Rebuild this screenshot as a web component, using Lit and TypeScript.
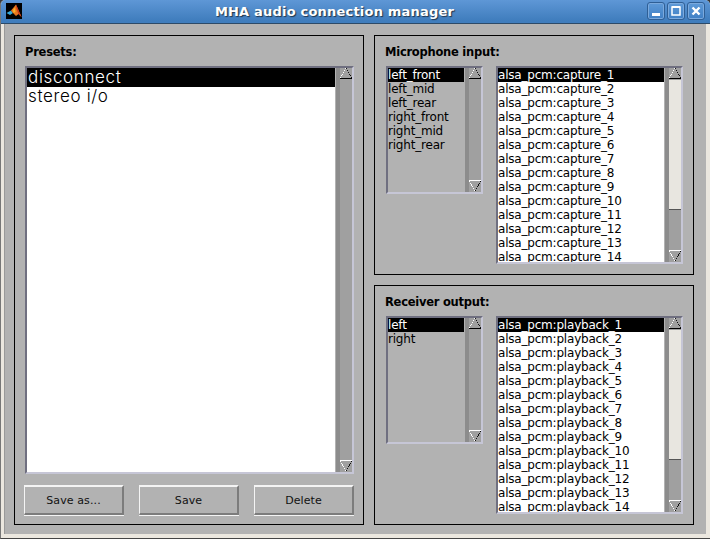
import { LitElement, html, css, svg } from "lit";
import { customElement, property } from "lit/decorators.js";

@customElement("scroll-bar")
class ScrollBar extends LitElement {
  @property({ type: Boolean }) thumb = false;
  static styles = css`
    :host { display: flex; flex: none; width: 16px; background: #8c8c8c; padding-left: 4px; box-sizing: border-box; }
    .track { flex: 1; display: flex; flex-direction: column; background: #a0a0a0; }
    .btn { display: block; width: 12px; height: 12px; flex: none; background: #a0a0a0; }
    .fill { flex: 1; min-height: 0; }
    .thumb { height: 130px; flex: none; background: #e8e6e0; border-bottom: 1px solid #555; box-sizing: border-box; }
  `;
  render() {
    return html`<div class="track">
      <svg class="btn" viewBox="0 0 12 12" width="12" height="12" shape-rendering="crispEdges">
        <path d="M6 0.5L0.5 10" stroke="#fff" stroke-width="1" stroke-dasharray="1 1" fill="none"/>
        <path d="M6 0.5L11.5 10" stroke="#111" stroke-width="1" stroke-dasharray="1 1" fill="none"/>
        <rect x="0" y="10" width="12" height="1" fill="#000"/>
      </svg>
      ${this.thumb ? html`<div class="thumb"></div>` : null}
      <div class="fill"></div>
      <svg class="btn" viewBox="0 0 12 12" width="12" height="12" shape-rendering="crispEdges">
        <rect x="0" y="0" width="12" height="1" fill="#fff"/>
        <path d="M0.5 1L6 11" stroke="#fff" stroke-width="1" stroke-dasharray="1 1" fill="none"/>
        <path d="M11.5 1L6 11" stroke="#111" stroke-width="1" stroke-dasharray="1 1" fill="none"/>
      </svg>
    </div>`;
  }
}

@customElement("list-box")
class ListBox extends LitElement {
  @property({ type: Array }) items: string[] = [];
  @property({ type: Boolean }) big = false;
  @property({ type: Boolean }) white = false;
  @property({ type: Boolean }) thumb = false;
  static styles = css`
    :host { display: block; }
    .box { display: flex; width: 100%; height: 100%; box-sizing: border-box; border-style: solid; border-width: 2px;
      border-color: #6f6f80 #c6c6d6 #c6c6d6 #6f6f80; }
    .rows { flex: 1; min-width: 0; overflow: hidden; margin-right: 1px; }
    .white { background: #fff; }
    .row { height: 14px; padding-left: 0; font: 12px/15px "DejaVu Sans", sans-serif; letter-spacing: -0.2px; color: #000; white-space: nowrap; }
    .big .row { height: 19px; padding-left: 1px; font: 300 17px/19px Inter, "DejaVu Sans", sans-serif; letter-spacing: 0.65px; color: #000; }
    .row.sel, .big .row.sel { background: #000; color: #fff; }
  `;
  render() {
    return html`<div class="box ${this.big ? "big" : ""}">
      <div class="rows ${this.white ? "white" : ""}">
        ${this.items.map((t, i) => html`<div class="row ${i === 0 ? "sel" : ""}">${t}</div>`)}
      </div>
      <scroll-bar ?thumb=${this.thumb}></scroll-bar>
    </div>`;
  }
}

const seq = (p: string, n: number) => Array.from({ length: n }, (_, i) => `alsa_pcm:${p}_${i + 1}`);

@customElement("app-root")
class AppRoot extends LitElement {
  static styles = css`
    :host { display: block; width: 710px; height: 539px; overflow: hidden; background: #3a3a3a; font-family: "DejaVu Sans", sans-serif; }
    .win { height: 539px; box-sizing: border-box; display: flex; flex-direction: column; background: #ebe7df; border-radius: 5px 5px 0 0; overflow: hidden; border-bottom: 1px solid #444; border-left: 1px solid #777; }
    .title { flex: none; height: 24px; box-sizing: border-box; display: flex; align-items: center; background: linear-gradient(#5e97d6, #3f7dbd 90%); border-bottom: 1px solid #2c4a68; padding: 0 5px 1px 5px; position: relative; }
    .logo { display: block; flex: none; }
    .caption { flex: 1; text-align: center; color: #fff; font-weight: 700; font-size: 13px; letter-spacing: 0.2px; text-shadow: 1px 1px 1px #20344a; }
    .wbtns { display: flex; gap: 2px; }
    .wbtn { display: block; width: 18px; height: 18px; box-sizing: border-box; border: 1px solid #2f5f95; border-radius: 3px; background: linear-gradient(#5f9ad8, #3f7fc4); box-shadow: inset 0 0 0 1px #7aa9dd; }
    .body { flex: 1; min-height: 0; margin: 0 4px 4px 3px; background: #b2b2b2; padding: 11px 11px 9px 9px; display: grid; grid-template-columns: 350px 320px; gap: 10px; border-left: 1px solid #999; }
    .col { display: grid; grid-template-rows: 240px 240px; gap: 10px; }
    .panel { border: 1px solid #000; box-sizing: border-box; position: relative; padding: 9px 0 0 10px; }
    .label { font-weight: 700; font-size: 11.5px; line-height: 14px; height: 21px; color: #000; letter-spacing: -0.25px; }
    .presets { width: 329px; height: 408px; }
    .pair { display: flex; align-items: flex-start; margin-left: 1px; gap: 13px; }
    .l1 { width: 97px; height: 128px; }
    .l2 { width: 187px; height: 198px; }
    .buttons { display: flex; gap: 15px; margin: 11px 0 0 -1px; }
    .b { width: 100px; height: 30px; box-sizing: border-box; background: #b2b2b2; border-style: solid; border-width: 2px 2px 2px 1px; border-color: #f4f4f4 #7c7c7c #7c7c7c #f4f4f4; box-shadow: 0 1px 0 #f4f4f4; font: 11px/26px "DejaVu Sans", sans-serif; letter-spacing: 0.1px; color: #111; text-align: center; padding: 1px 0 0; }
  `;
  logo() {
    return svg`<svg class="logo" width="16" height="16" viewBox="0 0 16 16">
      <rect width="16" height="16" fill="#000"/>
      <path d="M0.5 10L5 7.5L7 10L4 12Z" fill="#35a8d8"/>
      <path d="M5 7.5L8 4L10 1.5L12 6L15.5 14L12.5 11L10 13L7 10Z" fill="#e8761e"/>
      <path d="M10 1.5L12 6L15.5 14L12.5 11L10.5 6Z" fill="#c9381a"/>
      <path d="M7 7L9 4.5L9.5 9L7.5 10Z" fill="#f7b52c"/>
    </svg>`;
  }
  render() {
    return html`<div class="win">
      <div class="title">
        ${this.logo()}
        <div class="caption">MHA audio connection manager</div>
        <div class="wbtns">
          <svg class="wbtn" viewBox="0 0 16 16"><rect x="4" y="10" width="8" height="3" fill="#fff"/></svg>
          <svg class="wbtn" viewBox="0 0 16 16"><rect x="4" y="4" width="8" height="8" fill="none" stroke="#fff" stroke-width="1.5"/><rect x="4" y="3" width="8" height="2" fill="#fff"/></svg>
          <svg class="wbtn" viewBox="0 0 16 16"><path d="M4.5 4.5L11.5 11.5M11.5 4.5L4.5 11.5" stroke="#fff" stroke-width="2.4"/></svg>
        </div>
      </div>
      <div class="body">
        <div class="panel">
          <div class="label">Presets:</div>
          <list-box class="presets" big white .items=${["disconnect", "stereo i/o"]}></list-box>
          <div class="buttons">
            <button class="b">Save as...</button>
            <button class="b">Save</button>
            <button class="b">Delete</button>
          </div>
        </div>
        <div class="col">
          <div class="panel">
            <div class="label">Microphone input:</div>
            <div class="pair">
              <list-box class="l1" .items=${["left_front","left_mid","left_rear","right_front","right_mid","right_rear"]}></list-box>
              <list-box class="l2" white thumb .items=${seq("capture", 14)}></list-box>
            </div>
          </div>
          <div class="panel">
            <div class="label">Receiver output:</div>
            <div class="pair">
              <list-box class="l1" .items=${["left","right"]}></list-box>
              <list-box class="l2" white thumb .items=${seq("playback", 14)}></list-box>
            </div>
          </div>
        </div>
      </div>
    </div>`;
  }
}
